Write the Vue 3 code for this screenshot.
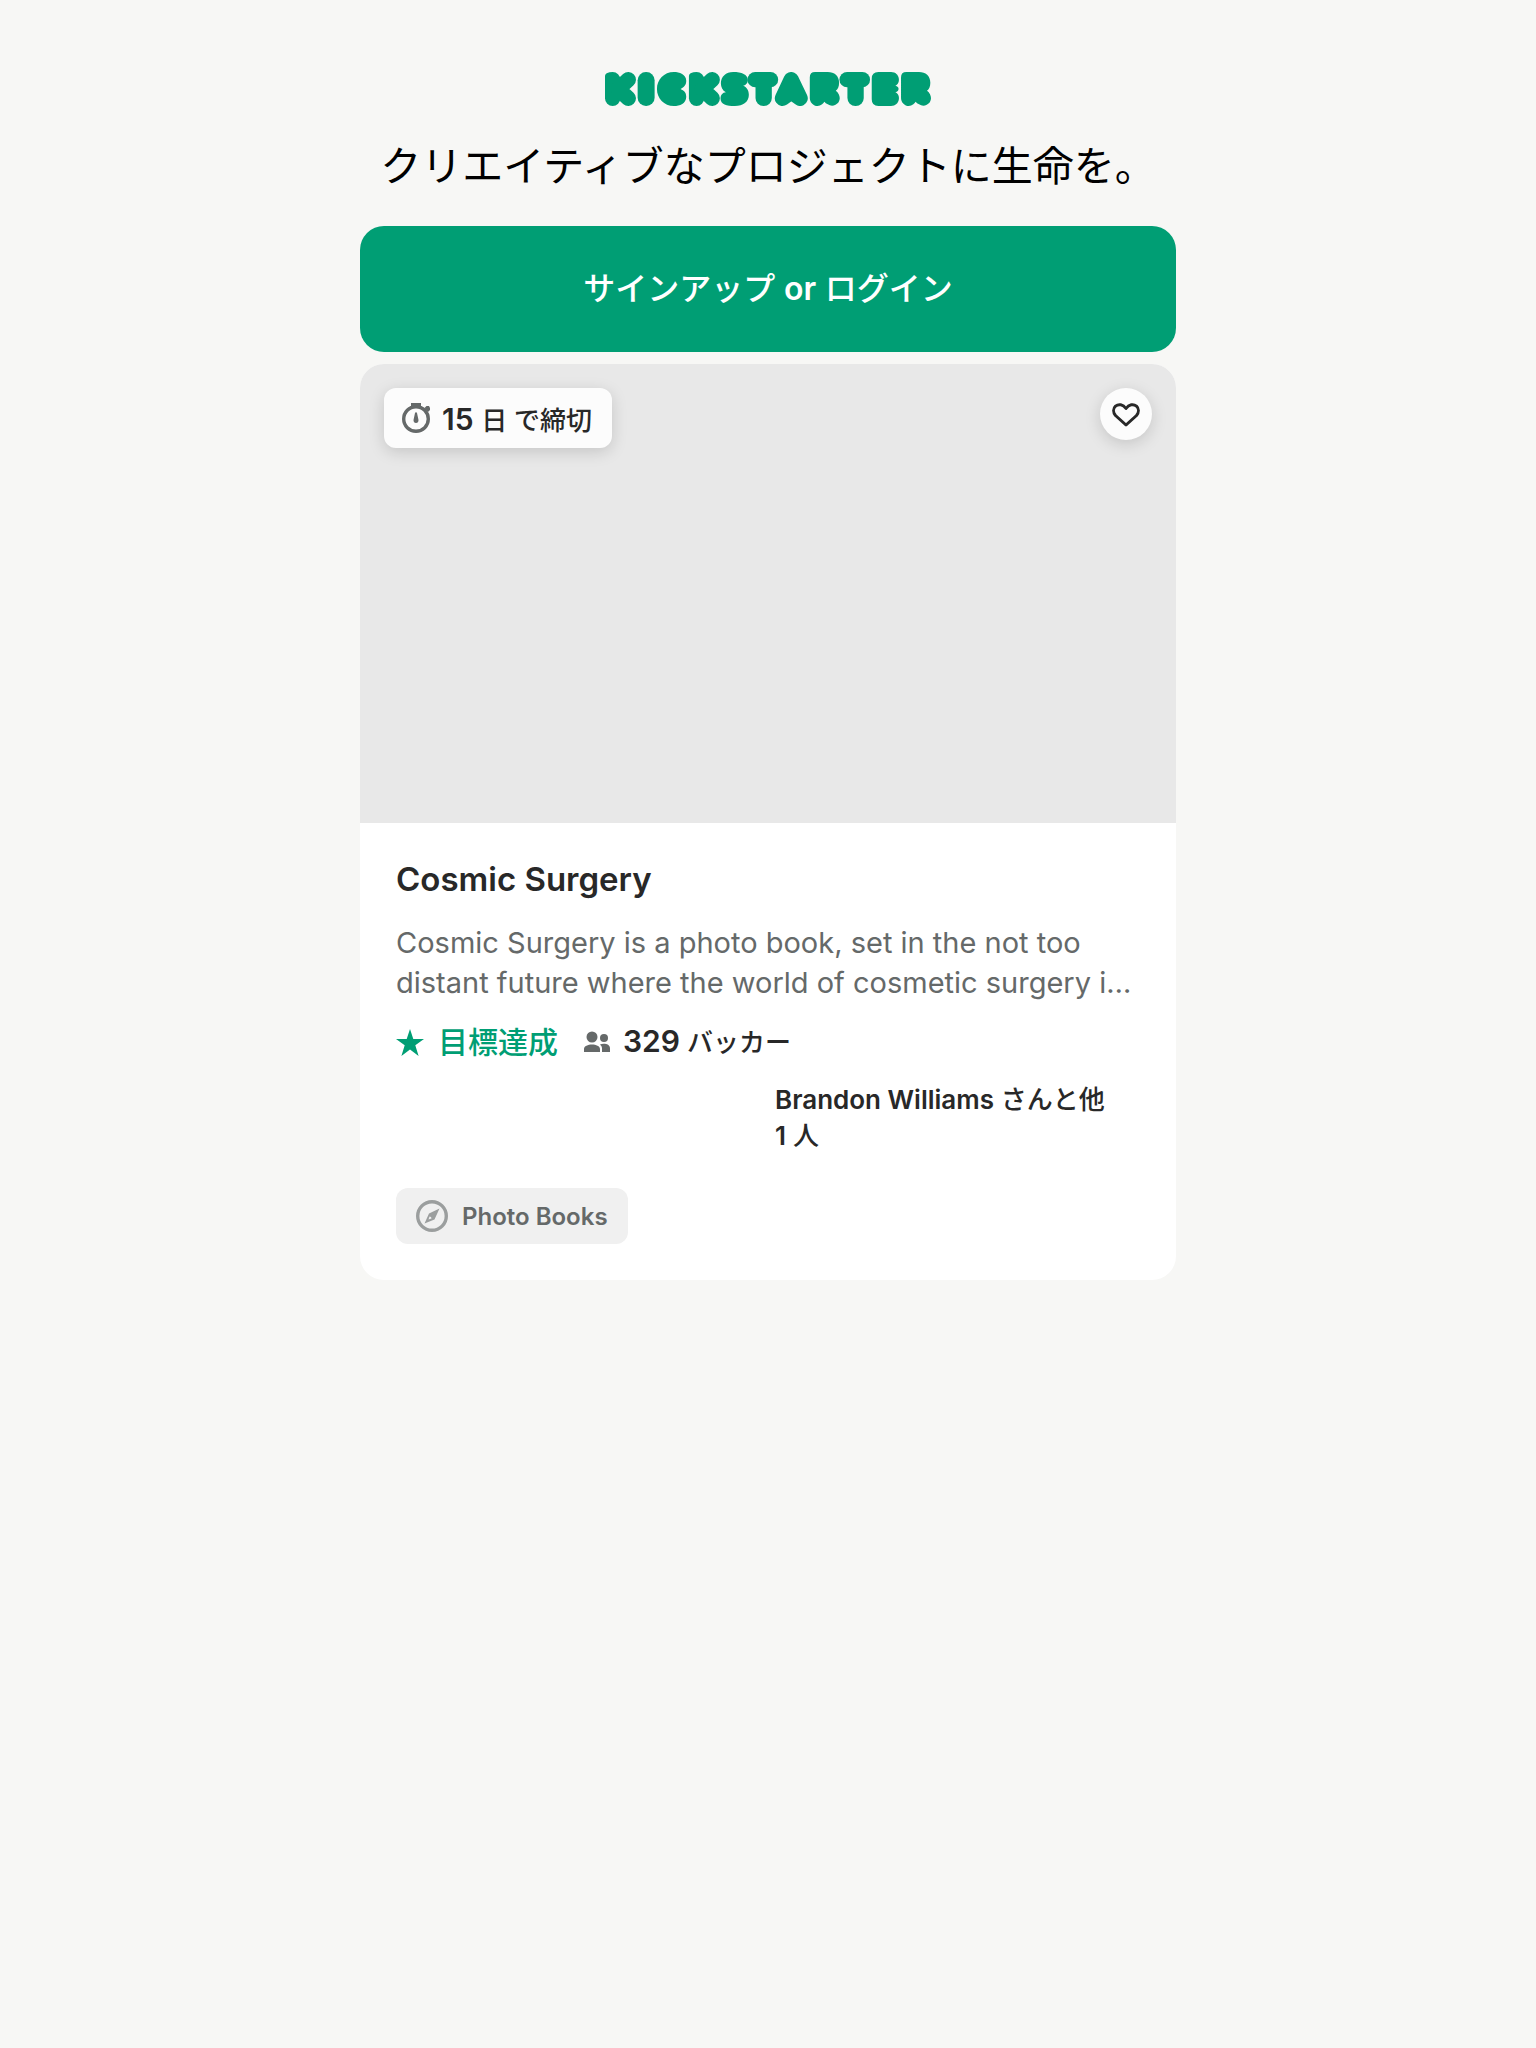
<script setup>
const project = {
  daysLeft: 15,
  title: 'Cosmic Surgery',
  blurb: 'Cosmic Surgery is a photo book, set in the not too distant future where the world of cosmetic surgery i…',
  backers: 329,
  friend: 'Brandon Williams',
  others: 1,
  category: 'Photo Books'
}
</script>

<template>
  <main class="page">
    <header class="intro">
      <svg class="logo" viewBox="45 36 979 102" role="img" aria-label="Kickstarter">
        <defs>
          <g id="mark-k">
            <path d="M45 48Q45 44 50 40Q58 36 68 36A23 23 0 0 1 91 59V115A23 23 0 0 1 45 115Z" />
            <path class="limb" d="M115 59L85 87L115 115" />
          </g>
          <g id="mark-t">
            <rect x="473" y="36" width="92" height="46" rx="23" />
            <rect x="497" y="40" width="49" height="98" rx="24" />
          </g>
          <path id="mark-r" d="M660 52Q660 36 676 36H714C734 36 748 48 748 68C748 80 744 88 738 92C746 98 750 106 750 115A23 23 0 0 1 714 133Q707 130 704 125Q700 130 697 133A23 23 0 0 1 660 115Z" />
        </defs>
        <use href="#mark-k" />
        <rect x="143" y="36" width="51" height="102" rx="25" />
        <path d="M252 36C268 36 289 43 289 62C289 76 282 80 272 87C282 92 289 97 289 110C289 130 270 138 252 138C222 138 201 115 201 87C201 59 222 36 252 36Z" />
        <use href="#mark-k" x="252" />
        <path d="M430 36C455 36 474 44 474 60C474 71 466 76 460 77C470 81 477 90 477 104C477 125 460 138 435 138C410 138 392 132 392 116C392 105 398 98 408 97C398 92 393 82 393 70C393 50 408 36 430 36Z" />
        <use href="#mark-t" />
        <path class="limb solid" d="M578 115L604 59L631 115L604 96Z" />
        <use href="#mark-r" />
        <use href="#mark-t" x="276" />
        <path d="M846 56Q846 36 866 36H904C932 36 934 72 917 77C930 79 930 93 917 97C934 103 932 138 904 138H866Q846 138 846 118Z" />
        <use href="#mark-r" x="274" />
      </svg>
      <h1>クリエイティブなプロジェクトに生命を。</h1>
    </header>

    <button class="login" type="button">サインアップ <span class="latin">or</span> ログイン</button>

    <article class="card">
      <div class="cover">
        <p class="deadline">
          <svg class="timer" viewBox="0 0 28 30" aria-hidden="true">
            <circle cx="14" cy="16" r="12.300" fill="none" stroke="currentColor" stroke-width="3.400" />
            <path d="M9 0h10v3l2 2H7l2-2zM22.500 5l2-2h2.500l1 2v2l-2 2zM14 9l1 1 1.500 7q0 3-2.500 3t-2.500-3l1.500-7z" fill="currentColor" />
          </svg>
          <span><strong>{{ project.daysLeft }}&nbsp;</strong>日 で締切</span>
        </p>
        <button class="save" type="button" aria-label="Save project">
          <svg viewBox="0 0 28 24" aria-hidden="true">
            <path d="M14 22L3.500 12.500C1 9.500 1 5.500 3.500 3.200C6.500 .8 11 1.200 14 5.500C17 1.200 21.500 .8 24.500 3.200C27 5.500 27 9.500 24.500 12.500Z" fill="none" stroke="currentColor" stroke-width="3" stroke-linejoin="round" />
          </svg>
        </button>
      </div>

      <div class="details">
        <h2>{{ project.title }}</h2>
        <p class="blurb">{{ project.blurb }}</p>
        <div class="stats">
          <span class="funded">
            <svg class="star" viewBox="0 0 28 27" aria-hidden="true">
              <path d="M14 0l3.300 10H28l-8.700 6.200L22.600 27 14 20.500 5.400 27l3.300-10.800L0 10h10.700z" fill="currentColor" />
            </svg>
            目標達成
          </span>
          <span class="backers">
            <svg class="people" viewBox="0 0 26 22" aria-hidden="true">
              <g fill="currentColor">
                <circle cx="8" cy="6" r="5.500" />
                <circle cx="20" cy="7" r="4" />
                <path d="M0 21v-3c0-6 16-6 16 0v3zM18 21v-4q0-2-2-3.500c4-1.500 10-.5 10 4V21z" />
              </g>
            </svg>
            <span><strong>{{ project.backers }}</strong> バッカー</span>
          </span>
        </div>
        <div class="friends">
          <div class="avatars"></div>
          <p>
            <span class="latin">{{ project.friend }}</span> さんと他<br>
            <span class="latin">{{ project.others }}</span> 人
          </p>
        </div>
        <a class="category" href="#photo-books">
          <svg class="compass" viewBox="0 0 32 32" aria-hidden="true">
            <circle cx="16" cy="16" r="14.300" fill="none" stroke="currentColor" stroke-width="3.400" />
            <path d="M23.500 8.500L18.500 19.500L8.500 23.500L13 13.500ZM13.500 16.500L12.500 19.500L15.500 18.500A2 2 0 0 0 13.500 16.500Z" fill="currentColor" fill-rule="evenodd" />
          </svg>
          {{ project.category }}
        </a>
      </div>
    </article>
  </main>
</template>

<style>
body {
  margin: 0;
  background: #f7f7f5;
}
</style>

<style scoped>
.page {
  max-width: 816px;
  margin: 0 auto;
  padding: 72px 24px;
  font-family: Inter, "Noto Sans CJK JP", sans-serif;
  color: #282828;
}
h1, h2, p {
  margin: 0;
}
.intro {
  display: flex;
  flex-direction: column;
  align-items: center;
  gap: 30px;
}
.logo {
  width: 326px;
  height: 34px;
  fill: #009e74;
}
.limb {
  fill: none;
  stroke: #009e74;
  stroke-width: 46;
  stroke-linecap: round;
  stroke-linejoin: round;
}
.limb.solid {
  fill: #009e74;
}
h1 {
  font-size: 41px;
  line-height: 60px;
  font-weight: 400;
  color: #000;
}
.login {
  display: block;
  width: 100%;
  height: 126px;
  margin: 30px 0 12px;
  border: 0;
  border-radius: 24px;
  background: #009e74;
  color: #fff;
  font: 500 32px/40px Inter, "Noto Sans CJK JP", sans-serif;
}
.latin {
  font-weight: 600;
}
.card {
  overflow: hidden;
  border-radius: 24px;
  background: #fff;
}
.cover {
  display: flex;
  justify-content: space-between;
  align-items: flex-start;
  box-sizing: border-box;
  aspect-ratio: 16 / 9;
  padding: 24px;
  background: #e8e8e8;
}
.deadline {
  display: flex;
  align-items: center;
  gap: 12px;
  height: 60px;
  padding: 0 20px 0 18px;
  border-radius: 12px;
  background: #fcfcfc;
  box-shadow: 0 4px 16px rgba(0, 0, 0, 0.15);
  font-size: 26px;
  font-weight: 500;
}
.timer {
  width: 28px;
  height: 30px;
  color: #656969;
}
strong {
  font-size: 30px;
  font-weight: 600;
}
.save {
  display: grid;
  place-items: center;
  box-sizing: border-box;
  width: 52px;
  height: 52px;
  padding: 2px 0 0;
  border: 0;
  border-radius: 50%;
  background: #fcfcfc;
  box-shadow: 0 4px 16px rgba(0, 0, 0, 0.15);
  color: #282828;
}
.save svg {
  width: 28px;
  height: 24px;
}
.details {
  padding: 36px;
}
h2 {
  font-size: 33px;
  line-height: 40px;
  font-weight: 600;
}
.blurb {
  margin-top: 24px;
  font-size: 29px;
  line-height: 40px;
  color: #656969;
}
.stats {
  display: flex;
  align-items: center;
  gap: 26px;
  height: 40px;
  margin-top: 19px;
}
.funded, .backers {
  display: flex;
  align-items: center;
  gap: 13px;
  line-height: 36px;
  white-space: nowrap;
}
.funded {
  gap: 14px;
  font-size: 30px;
  font-weight: 500;
  color: #009e74;
}
.star {
  width: 28px;
  height: 27px;
}
.backers {
  font-size: 26px;
  font-weight: 500;
}
.people {
  width: 26px;
  height: 22px;
  color: #656969;
}
.friends {
  display: grid;
  grid-template-columns: 1fr 1fr;
  gap: 14px;
  margin-top: 20px;
  font-size: 26px;
  line-height: 36px;
  font-weight: 500;
}
.category {
  display: inline-flex;
  align-items: center;
  gap: 14px;
  height: 56px;
  margin-top: 34px;
  padding: 0 20px;
  border-radius: 12px;
  background: #f0f0f0;
  color: #656969;
  font-size: 24px;
  font-weight: 600;
  text-decoration: none;
  vertical-align: top;
}
.compass {
  width: 32px;
  height: 32px;
  color: #9b9e9e;
}
</style>
